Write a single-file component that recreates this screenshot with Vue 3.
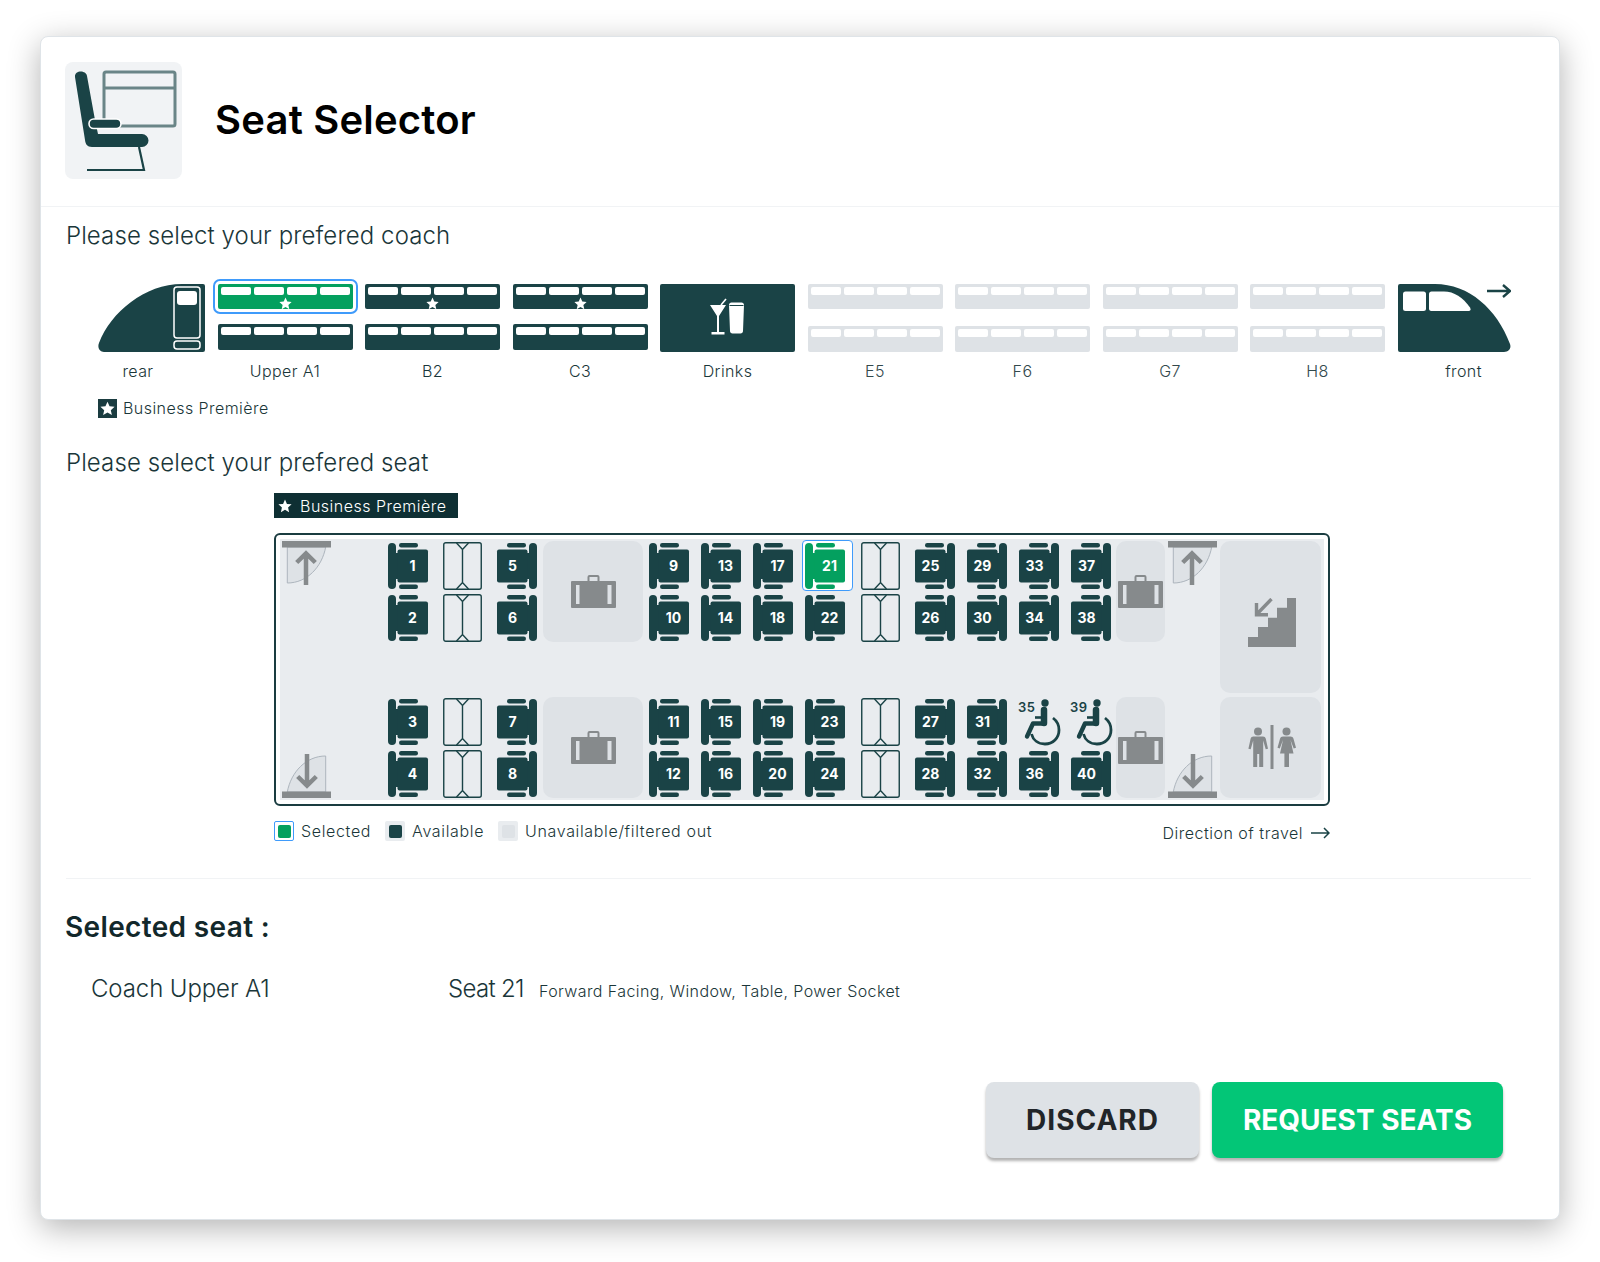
<template>
  <div class="page">
    <div class="card">
      <header class="head">
        <div class="logo">
          <svg width="117" height="117" viewBox="0 0 117 117">
            <rect x="39" y="10" width="71" height="54" rx="2" fill="none" stroke="#6a8587" stroke-width="3" />
            <path d="M39 26h71" stroke="#6a8587" stroke-width="3" />
            <path d="M10 15C9.500 8 21 8 22 14l8 44 3 14h44a6.500 6.500 0 0 1 0 13H27c-5 0-6.500-3-7-7z" fill="#1a4346" />
            <rect x="24" y="57" width="32" height="9.500" rx="4.700" fill="#1a4346" stroke="#fff" stroke-width="1.600" />
            <path d="M74 85l5 23H22" fill="none" stroke="#1a4346" stroke-width="2.200" />
          </svg>
        </div>
        <h1>Seat Selector</h1>
      </header>

      <div class="body">
        <h2 class="prompt">Please select your prefered coach</h2>

        <div class="train">
          <div class="end end-rear">
            <svg width="107" height="68" viewBox="0 0 107 68">
              <path d="M105 0H84C47 0 13 28 1 59c-2 5 1 9 5 9h99a2 2 0 0 0 2-2V2a2 2 0 0 0-2-2z" fill="#1a4346" />
              <rect x="76" y="3" width="26" height="51" rx="3" fill="none" stroke="#fff" stroke-width="1.500" />
              <rect x="79" y="7" width="20" height="14" rx="3" fill="#fff" />
              <rect x="76" y="57" width="26" height="8" rx="3" fill="none" stroke="#fff" stroke-width="1.500" />
            </svg>
            <span class="coach-name">rear</span>
          </div>

          <div v-for="c in coaches" :key="c.name" class="coach" :class="{ off: c.off }">
            <div v-if="c.drinks" class="drinks">
              <svg width="135" height="68" viewBox="0 0 135 68">
                <path d="M50 21h16l-7 11v16h5.500v2.400H51.500V48H57V32z" fill="#fff" />
                <path d="M61 21l5-6" stroke="#fff" stroke-width="1.600" />
                <path d="M69 21c0-1.500 1-2.500 2.500-2.500h10c1.500 0 2.500 1 2.500 2.500l-1 26c0 1.500-1 2.500-2.500 2.500h-8c-1.500 0-2.500-1-2.500-2.500z" fill="#fff" />
                <path d="M69.500 21.500h14" stroke="#1a4346" stroke-width="1" />
              </svg>
            </div>
            <div v-else class="decks">
              <div class="deck" :class="{ picked: c.picked }">
                <i class="win" v-for="n in 4" :key="n"></i>
                <svg v-if="c.star" class="deck-star" width="13" height="13" viewBox="0 0 24 24">
                  <path d="M12 1l3.300 7.400 8 .8-6 5.400 1.700 7.900-7-4.100-7 4.100 1.700-7.900-6-5.400 8-.8z" fill="#fff" />
                </svg>
              </div>
              <div class="deck">
                <i class="win" v-for="n in 4" :key="n"></i>
              </div>
            </div>
            <span class="coach-name">{{ c.name }}</span>
          </div>

          <div class="end end-front">
            <svg width="113" height="68" viewBox="0 0 113 68">
              <path d="M2 0h35c34 0 62 25 75 60 1.500 4-1 8-6 8H2a2 2 0 0 1-2-2V2a2 2 0 0 1 2-2z" fill="#1a4346" />
              <rect x="5" y="7.500" width="23" height="19.500" rx="2.500" fill="#fff" />
              <path d="M31 10c0-1.500 1-2.500 2.500-2.500H46c10 0 19 6 26 16 1.300 2 .5 3.500-1.500 3.500h-37c-2 0-2.500-1-2.500-2.500z" fill="#fff" />
              <rect x="85" y="0" width="28" height="16" fill="#fff" />
              <path d="M89 7h23M105 1l7 6-7 6" fill="none" stroke="#1a4346" stroke-width="2.400" />
            </svg>
            <span class="coach-name">front</span>
          </div>
        </div>

        <div class="bp-key">
          <span class="bp-box">
            <svg width="15" height="15" viewBox="0 0 24 24">
              <path d="M12 1l3.300 7.400 8 .8-6 5.400 1.700 7.900-7-4.100-7 4.100 1.700-7.900-6-5.400 8-.8z" fill="#fff" />
            </svg>
          </span>
          Business Première
        </div>

        <h2 class="prompt prompt-seat">Please select your prefered seat</h2>

        <div class="plan-wrap">
          <div class="bp-badge">
            <svg width="14" height="14" viewBox="0 0 24 24">
              <path d="M12 1l3.300 7.400 8 .8-6 5.400 1.700 7.900-7-4.100-7 4.100 1.700-7.900-6-5.400 8-.8z" fill="#fff" />
            </svg>
            Business Première
          </div>

          <div class="frame">
            <div class="plan">
              <div class="col door-col">
                <svg width="49" height="46" viewBox="0 0 49 46">
                  <path d="M5.300 6v36C25 42 40 26 43.700 6z" fill="#dee2e6" stroke="#adb5bd" stroke-width="1" />
                  <rect width="49" height="6.500" fill="#868a8c" />
                  <path d="M24 44V13M14.700 21.500L24 12.500l9.300 9" fill="none" stroke="#868a8c" stroke-width="4.500" />
                </svg>
                <svg class="flip-both" width="49" height="46" viewBox="0 0 49 46">
                  <path d="M5.300 6v36C25 42 40 26 43.700 6z" fill="#dee2e6" stroke="#adb5bd" stroke-width="1" />
                  <rect width="49" height="6.500" fill="#868a8c" />
                  <path d="M24 44V13M14.700 21.500L24 12.500l9.300 9" fill="none" stroke="#868a8c" stroke-width="4.500" />
                </svg>
              </div>

              <template v-for="column in columns" :key="column.key">
                <div class="col" :class="column.cls">
                  <div v-for="(pair, i) in column.pairs" :key="i" class="pair" :class="column.kind">
                    <template v-if="column.kind === 'seats'">
                      <div v-for="s in pair" :key="s" class="seat-slot" :class="{ picked: s === 21 }">
                        <svg width="40" height="46" viewBox="0 0 40 46">
                          <template v-if="s === 35 || s === 39">
                            <text x="-1" y="13" class="wc-num">{{ s }}</text>
                            <g transform="translate(-1 0)">
                              <circle cx="27" cy="4" r="3.700" fill="#1a4346" />
                              <path d="M26.500 11V24.500H15L9 37.500" fill="none" stroke="#1a4346" stroke-width="4.400" stroke-linejoin="round" stroke-linecap="round" />
                              <path d="M26 11V24" stroke="#1a4346" stroke-width="6.500" stroke-linecap="round" />
                              <path d="M26 18.500H17" stroke="#1a4346" stroke-width="2.600" />
                              <path d="M13.500 35C15 41 20 45 27 45c8 0 14-6 14-14 0-5-2-9-6-12" fill="none" stroke="#1a4346" stroke-width="2.800" />
                            </g>
                          </template>
                          <template v-else>
                            <g :transform="column.flip ? 'matrix(-1 0 0 1 40 0)' : undefined" :fill="s === 21 ? '#04a05f' : '#1a4346'">
                              <rect width="8" height="46" rx="4" />
                              <rect x="5" y="10" width="8" height="26" />
                              <rect x="9.500" y="6.500" width="30.500" height="33" rx="2" />
                              <rect x="11" width="19" height="4.500" rx="2.200" />
                              <rect x="11" y="41.500" width="19" height="4.500" rx="2.200" />
                            </g>
                            <text :x="column.flip ? 15.500 : 24.500" y="27.500" class="seat-num">{{ s }}</text>
                          </template>
                        </svg>
                      </div>
                    </template>
                    <template v-else-if="column.kind === 'tables'">
                      <svg v-for="n in 2" :key="n" width="39" height="48" viewBox="0 0 39 48">
                        <rect x=".75" y=".75" width="37.500" height="46.500" rx="2" fill="none" stroke="#1a4346" stroke-width="1.400" />
                        <path d="M13.500 1l6 6.500 6-6.500M19.500 7.500v33M13.500 47l6-6.500 6 6.500" fill="none" stroke="#1a4346" stroke-width="1.400" />
                      </svg>
                    </template>
                    <template v-else>
                      <svg width="45" height="33" viewBox="0 0 45 33">
                        <path d="M17.500 7V2a1 1 0 0 1 1-1h8a1 1 0 0 1 1 1v5" fill="none" stroke="#868a8c" stroke-width="2" />
                        <rect y="6" width="45" height="27" rx="1" fill="#868a8c" />
                        <rect x="5" y="10" width="3.500" height="19" fill="#dee2e6" />
                        <rect x="36.500" y="10" width="4" height="19" fill="#dee2e6" />
                      </svg>
                    </template>
                  </div>
                </div>
              </template>

              <div class="col door-col door-right">
                <svg width="49" height="46" viewBox="0 0 49 46">
                  <path d="M5.300 6v36C25 42 40 26 43.700 6z" fill="#dee2e6" stroke="#adb5bd" stroke-width="1" />
                  <rect width="49" height="6.500" fill="#868a8c" />
                  <path d="M24 44V13M14.700 21.500L24 12.500l9.300 9" fill="none" stroke="#868a8c" stroke-width="4.500" />
                </svg>
                <svg class="flip-both" width="49" height="46" viewBox="0 0 49 46">
                  <path d="M5.300 6v36C25 42 40 26 43.700 6z" fill="#dee2e6" stroke="#adb5bd" stroke-width="1" />
                  <rect width="49" height="6.500" fill="#868a8c" />
                  <path d="M24 44V13M14.700 21.500L24 12.500l9.300 9" fill="none" stroke="#868a8c" stroke-width="4.500" />
                </svg>
              </div>

              <div class="col rooms">
                <div class="room room-stairs">
                  <svg width="50" height="49" viewBox="0 0 50 49">
                    <path d="M0 39h10V29h10v-9.300h9V9.700h10V0h9v49H0z" fill="#868a8c" />
                    <path d="M23.500 1L8.500 16.500M8.500 5v11.700H20" fill="none" stroke="#868a8c" stroke-width="3.400" />
                  </svg>
                </div>
                <div class="room room-wc">
                  <svg width="48" height="45" viewBox="0 0 48 45">
                    <circle cx="10" cy="6.500" r="4" fill="#868a8c" />
                    <path d="M5 11.500h10c1.500 0 2.300.7 2.800 2.200l2.200 10-2.300.6-2.500-8.800V42h-4V29h-2v13h-4V15.500l-2.500 8.800-2.300-.6 2.200-10c.5-1.500 1.300-2.200 2.800-2.200z" fill="#868a8c" />
                    <path d="M24 0v44" stroke="#868a8c" stroke-width="3" />
                    <circle cx="38.500" cy="6.500" r="4" fill="#868a8c" />
                    <path d="M34.500 11.500h8c1.500 0 2.500.8 3 2.200l2.500 9-2.300.7-3.200-8.400 3 13.500H41V42h-4.600V28.500H32l3-13.500-3.200 8.400-2.300-.7 2.500-9c.5-1.400 1.500-2.200 3-2.200z" fill="#868a8c" />
                  </svg>
                </div>
              </div>
            </div>
          </div>

          <div class="legend">
            <div class="legend-item">
              <span class="swatch sw-picked"><i></i></span>
              Selected
            </div>
            <div class="legend-item">
              <span class="swatch sw-free"><i></i></span>
              Available
            </div>
            <div class="legend-item">
              <span class="swatch sw-off"><i></i></span>
              Unavailable/filtered out
            </div>
            <div class="direction">
              Direction of travel
              <svg width="19" height="12" viewBox="0 0 19 12">
                <path d="M0 6h18M13 1l5 5-5 5" fill="none" stroke="#1a4346" stroke-width="1.500" />
              </svg>
            </div>
          </div>
        </div>

        <div class="rule"></div>

        <h3 class="sel-title">Selected seat :</h3>
        <div class="sel-row">
          <span class="sel-coach">Coach Upper A1</span>
          <span class="sel-seat">Seat 21</span>
          <span class="sel-desc">Forward Facing, Window, Table, Power Socket</span>
        </div>

        <div class="actions">
          <button class="btn btn-discard">DISCARD</button>
          <button class="btn btn-request">REQUEST SEATS</button>
        </div>
      </div>
    </div>
  </div>
</template>

<script setup>
const coaches = [
  { name: 'Upper A1', star: true, picked: true },
  { name: 'B2', star: true },
  { name: 'C3', star: true },
  { name: 'Drinks', drinks: true },
  { name: 'E5', off: true },
  { name: 'F6', off: true },
  { name: 'G7', off: true },
  { name: 'H8', off: true }
]

const seatCol = (key, a, b, c, d, flip, cls) => ({
  key,
  kind: 'seats',
  flip,
  cls,
  pairs: [[a, b], [c, d]]
})
const tableCol = (key, cls) => ({ key, kind: 'tables', cls, pairs: [[], []] })
const bagCol = (key, cls) => ({ key, kind: 'bags', cls, pairs: [[], []] })

const columns = [
  seatCol('s1', 1, 2, 3, 4, false, 'c-first'),
  tableCol('t1', 'c-table'),
  seatCol('s5', 5, 6, 7, 8, true, 'c-after-table'),
  bagCol('b1', 'c-bag-wide'),
  seatCol('s9', 9, 10, 11, 12, false, 'c-after-bag'),
  seatCol('s13', 13, 14, 15, 16, false),
  seatCol('s17', 17, 18, 19, 20, false),
  seatCol('s21', 21, 22, 23, 24, false),
  tableCol('t2', 'c-table2'),
  seatCol('s25', 25, 26, 27, 28, true, 'c-after-table'),
  seatCol('s29', 29, 30, 31, 32, true),
  seatCol('s33', 33, 34, 35, 36, true),
  seatCol('s37', 37, 38, 39, 40, true),
  bagCol('b2', 'c-bag-small')
]
</script>

<style>
html,
body {
  margin: 0;
  background: #fff;
}
</style>

<style scoped>
.page {
  width: 1600px;
  height: 1262px;
  padding: 36px 40px 0;
  box-sizing: border-box;
  font-family: Inter, "Liberation Sans", sans-serif;
  color: #1a3639;
  overflow: hidden;
}

.card {
  width: 1520px;
  height: 1184px;
  box-sizing: border-box;
  background: #fff;
  border-radius: 8px;
  border: 1px solid #dfe4e8;
  box-shadow: 0 8px 32px rgba(0, 0, 0, 0.3);
}

.head {
  height: 170px;
  box-sizing: border-box;
  padding: 24px 24px 27px;
  display: flex;
  align-items: center;
  gap: 33px;
  border-bottom: 1px solid #f1f3f5;
}

.logo {
  width: 117px;
  height: 117px;
  background: #f1f3f5;
  border-radius: 8px;
  flex: none;
}

.logo svg {
  display: block;
}

.head h1 {
  margin: 0 0 2px;
  font-size: 40px;
  font-weight: 600;
  color: #000;
  letter-spacing: 0.2px;
}

.body {
  padding: 0 26px 0 25px;
}

.prompt {
  margin: 0;
  padding-top: 13px;
  font-size: 24px;
  line-height: 32px;
  font-weight: 300;
  letter-spacing: 0.1px;
}

.train {
  display: flex;
  margin-top: 32px;
  margin-left: 32px;
  gap: 12.500px;
}

.end,
.coach {
  display: flex;
  flex-direction: column;
  align-items: center;
}

.end svg {
  display: block;
}

.end-rear {
  width: 107px;
}

.end-rear .coach-name {
  padding-right: 27px;
}

.end-front {
  width: 113px;
}

.end-front .coach-name {
  padding-left: 19px;
}

.coach {
  width: 135px;
}

.coach-name {
  margin-top: 9px;
  font-size: 16px;
  line-height: 20px;
  font-weight: 300;
  letter-spacing: 0.4px;
}

.decks {
  height: 68px;
  display: flex;
  flex-direction: column;
  gap: 15px;
}

.coach.off .decks {
  gap: 17px;
}

.deck {
  position: relative;
  width: 135px;
  height: 25px;
  box-sizing: border-box;
  padding: 3px 3px 0;
  display: flex;
  gap: 3px;
  background: #1a4346;
  border-radius: 2px;
}

.deck + .deck {
  height: 26px;
}

.deck.picked {
  background: #04a05f;
  outline: 2px solid #3f9bfb;
  outline-offset: 3.500px;
}

.coach.off .deck {
  background: #dee2e6;
}

.coach.off .coach-name {
  color: #33494c;
}

.win {
  flex: 1;
  height: 8px;
  background: #fff;
  border-radius: 2px;
}

.deck-star {
  position: absolute;
  left: 61px;
  top: 13px;
}

.drinks {
  height: 68px;
  background: #1a4346;
  border-radius: 2px;
}

.drinks svg {
  display: block;
}

.bp-key {
  margin: 17px 0 0 32px;
  display: flex;
  align-items: center;
  gap: 6px;
  font-size: 16px;
  line-height: 20px;
  font-weight: 300;
  letter-spacing: 0.45px;
}

.bp-box {
  width: 19px;
  height: 19px;
  background: #1a3c40;
  display: flex;
  align-items: center;
  justify-content: center;
}

.prompt-seat {
  padding-top: 29px;
}

.plan-wrap {
  margin: 14px 0 0 208px;
  width: 1056px;
}

.bp-badge {
  width: 184px;
  height: 25px;
  box-sizing: border-box;
  padding-left: 4px;
  display: flex;
  align-items: center;
  gap: 8px;
  background: #0e2f33;
  color: #fff;
  font-size: 16px;
  font-weight: 300;
  letter-spacing: 0.5px;
}

.frame {
  margin-top: 15px;
  height: 273px;
  box-sizing: border-box;
  padding: 4px;
  border: 2px solid #1a3c40;
  border-radius: 6px;
}

.plan {
  height: 261px;
  box-sizing: border-box;
  padding: 2px 3px 2px 2px;
  display: flex;
  background: #e9ecef;
}

.col {
  flex: none;
  width: 40px;
  margin-left: 12px;
  display: flex;
  flex-direction: column;
  justify-content: space-between;
}

.door-col {
  width: 49px;
  margin-left: 0;
}

.door-right {
  margin-left: 3px;
}

.col svg {
  display: block;
}

.flip-both {
  transform: rotate(180deg);
}

.pair {
  height: 101px;
  display: flex;
  flex-direction: column;
  align-items: center;
  justify-content: center;
}

.pair.seats {
  gap: 6px;
}

.pair.tables {
  gap: 4px;
}

.pair.bags {
  background: #dee2e6;
  border-radius: 10px;
}

.seat-slot {
  position: relative;
}

.seat-slot.picked::before {
  content: "";
  position: absolute;
  left: -3px;
  top: -3px;
  width: 51px;
  height: 51px;
  box-sizing: border-box;
  background: #fff;
  border: 1.500px solid #3f9bfb;
  border-radius: 4px;
}

.seat-slot svg {
  position: relative;
  overflow: visible;
}

.seat-num {
  font-family: Inter, "Liberation Sans", sans-serif;
  font-size: 14px;
  font-weight: 700;
  fill: #fff;
  text-anchor: middle;
}

.wc-num {
  font-family: Inter, "Liberation Sans", sans-serif;
  font-size: 13px;
  font-weight: 600;
  fill: #1a4346;
  letter-spacing: 0.6px;
}

.c-first {
  margin-left: 57px;
}

.c-table {
  width: 39px;
  margin-left: 15px;
}

.c-table2 {
  width: 39px;
  margin-left: 16px;
}

.c-after-table {
  margin-left: 15px;
}

.c-bag-wide {
  width: 100px;
  margin-left: 6px;
}

.c-after-bag {
  margin-left: 6px;
}

.c-bag-small {
  width: 49px;
  margin-left: 5px;
}

.rooms {
  width: 101px;
  margin-left: 3px;
  gap: 4px;
}

.room {
  background: #dee2e6;
  border-radius: 10px;
  display: flex;
  align-items: center;
  justify-content: center;
}

.room-stairs {
  height: 152px;
  padding: 10px 0 0 4px;
  box-sizing: border-box;
}

.room-wc {
  height: 101px;
  padding-left: 3px;
  box-sizing: border-box;
}

.legend {
  margin-top: 13px;
  display: flex;
  align-items: center;
  font-size: 16px;
  line-height: 20px;
  font-weight: 300;
  letter-spacing: 0.65px;
}

.legend-item {
  display: flex;
  align-items: center;
  gap: 7px;
  margin-right: 14px;
}

.swatch {
  width: 20px;
  height: 20px;
  box-sizing: border-box;
  display: flex;
  align-items: center;
  justify-content: center;
  background: #e9ecef;
  border-radius: 2px;
}

.swatch i {
  width: 13px;
  height: 13px;
  border-radius: 2px;
}

.sw-picked {
  background: #fff;
  border: 1.500px solid #3f9bfb;
}

.sw-picked i {
  background: #04a05f;
}

.sw-free i {
  background: #1a4346;
}

.sw-off i {
  background: #dee2e6;
}

.direction {
  margin-left: auto;
  display: flex;
  align-items: center;
  gap: 8px;
  padding-top: 4px;
  letter-spacing: 0.5px;
}

.rule {
  margin-top: 35px;
  height: 1px;
  width: 1465px;
  background: #f1f3f5;
}

.sel-title {
  margin: 30px 0 0 -1px;
  font-size: 28px;
  line-height: 36px;
  font-weight: 600;
  letter-spacing: 0.35px;
  color: #12282b;
}

.sel-row {
  margin-top: 28px;
  padding-left: 25px;
  display: flex;
  align-items: baseline;
  font-weight: 300;
}

.sel-coach {
  width: 357px;
  font-size: 24px;
  line-height: 32px;
  letter-spacing: -0.1px;
}

.sel-seat {
  width: 91px;
  font-size: 24px;
  line-height: 32px;
  letter-spacing: -0.7px;
}

.sel-desc {
  font-size: 16px;
  letter-spacing: 0.4px;
}

.actions {
  margin-top: 77px;
  margin-right: 30px;
  display: flex;
  justify-content: flex-end;
  gap: 13px;
}

.btn {
  height: 76px;
  border: 0;
  border-radius: 8px;
  font-family: Inter, "Liberation Sans", sans-serif;
  font-size: 28px;
  font-weight: 700;
  box-shadow: 0 3px 3px rgba(0, 0, 0, 0.3);
}

.btn-discard {
  width: 213px;
  background: #dee2e6;
  color: #212529;
  letter-spacing: 1px;
}

.btn-request {
  width: 291px;
  background: #03c677;
  color: #fff;
}
</style>
